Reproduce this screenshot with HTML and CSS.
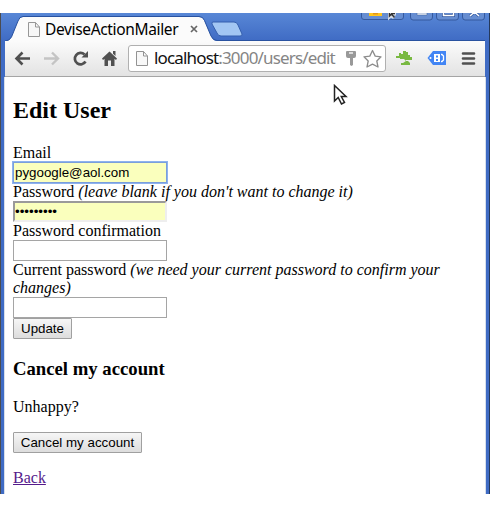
FILE: index.html
```
<!DOCTYPE html>
<html lang="en">
<head>
<meta charset="utf-8">
<title>DeviseActionMailer</title>
<link rel="stylesheet" href="styles.css">
</head>
<body>
<div class="window">
  <header class="chrome">
    <div class="tabstrip">
      <svg class="tab-shape" width="490" height="31" viewBox="0 13 490 31">
        <path d="M5 44V41Q9.500 41 11.500 37L18 21Q19.500 17 23 17H199Q203 17 204.500 21L211 36Q213 41 217 41H485V44Z" fill="#fbfbfb"/>
        <path d="M5 41Q9.500 41 11.500 37L18 21Q19.500 16.500 23 16.500H199Q203 16.500 204.500 20.500L211 36Q213 40.500 217 40.500H485" fill="none" stroke="#2952a0"/>
        <path d="M213 22H234Q237 22 238 25L242 34Q242.500 36 240 36H221Q218 36 217 33L212 24Q211.500 22 213 22Z" fill="#a2c6f3" stroke="#345fae"/>
        <g fill="#668dd1" stroke="#35599e"><path d="M361.500 12V17Q361.500 19.500 364 19.500H401Q403.500 19.500 403.500 17V12Z"/><path d="M410.500 12V17Q410.500 20 413 20H430Q432.500 20 432.500 17V12ZM436.500 12V17Q436.500 20 439 20H456Q458.500 20 458.500 17V12ZM462.500 12V17Q462.500 20 465 20H482Q484.500 20 484.500 17V12Z"/></g>
        <path d="M369 13H382V16H369Z" fill="#ffc51c"/><path d="M373 13H378V14.500H373Z" fill="#e29418"/>
        <path d="M389.500 12V17L391.500 15L394 18M391.500 14H396" fill="none" stroke="#d7dde8" stroke-width="3"/><path d="M389.500 12V16L391.500 14L394.500 17.500M391 13.500H395" fill="none" stroke="#333" stroke-width="1.500"/>
        <path d="M417 13H427V15H417Z" fill="#fff" stroke="#45649d" stroke-width=".6"/>
        <path d="M443.500 12V15.500H453.500V12M470 16L474.500 12L479 16" fill="none" stroke="#35599e" stroke-width="3"/><path d="M443.500 12V15.500H453.500V12M470 16L474.500 12L479 16" fill="none" stroke="#fff" stroke-width="1.500"/>
      </svg>
      <div class="tab">
        <svg width="12" height="15" viewBox="0 0 12 15"><path d="M.5.5H7.500L11.500 5V14.500H.5ZM7.500.5V5H11.500" fill="#f7f7f7" stroke="#979797"/></svg>
        <span class="tab-title">DeviseActionMailer</span>
        <svg class="tab-close" width="8" height="8" viewBox="0 0 8 8"><path d="M1 1L7 7M7 1L1 7" stroke="#666" stroke-width="1.700"/></svg>
      </div>
    </div>
    <div class="toolbar">
      <div class="nav">
        <svg width="110" height="26" viewBox="12 45 110 26">
          <path d="M30 58.500H17M22.500 52.500L16.500 58.500L22.500 64.500" fill="none" stroke="#505050" stroke-width="2.600"/>
          <path d="M44 58.500H57M52 52.500L58 58.500L52 64.500" fill="none" stroke="#c4c4c4" stroke-width="2.400"/>
          <path d="M84.500 54.500A5.700 5.700 0 1 0 85.500 61.500" fill="none" stroke="#505050" stroke-width="2.700"/><path d="M88 51V57.500H81.500Z" fill="#505050"/>
          <path d="M102 58.500L109.500 51.500L117 58.500L116 60L114.500 58.800V66H111V60.500H108V66H104.500V58.800L103 60ZM113 51H115.500V56L113 53.700Z" fill="#505050"/>
        </svg>
      </div>
      <div class="omnibox">
        <svg width="12" height="15" viewBox="0 0 12 15"><path d="M.5.5H7.500L11.500 5V14.500H.5ZM7.500.5V5H11.500" fill="#f8f8f8" stroke="#939393"/></svg>
        <span class="url"><b>localhost</b>:3000/users/edit</span>
        <svg class="box-icons" width="42" height="22" viewBox="344 47 42 22">
          <path d="M347 51H355Q356 51 356 52V56Q356 58 354 58H353V65L351.500 66L350 65V58H348Q346 58 346 56V52Q346 51 347 51Z" fill="#999"/><path d="M349 53H353" stroke="#fff" stroke-width="1.300"/>
          <path d="M372.500 50.500L375.200 56.100L381 56.800L376.800 61L378 67L372.500 64.200L367 67L368.200 61L364 56.800L369.800 56.100Z" fill="#fff" stroke="#8c8c8c" stroke-width="1.300" stroke-linejoin="round"/>
        </svg>
      </div>
      <svg class="extensions" width="84" height="26" viewBox="394 45 84 26">
        <path d="M396 56H399V53H401V54H403V51H406V52H408V55H410V57H412V60H406V61H408L410 63V65H401V63H403L406 61L404 59H400V58H396Z" fill="#79b942"/>
        <path d="M427.500 58L433 51H446V65H433Z" fill="#4285f4"/><path d="M434 54H440V62H434Z" fill="#fff"/><path d="M436 55.500H438V57.500H436ZM436 59H438V61H436Z" fill="#4285f4"/><path d="M440.500 53.500V62.500" stroke="#4285f4"/><path d="M441 54.500H442L443.500 56V60L442 61.500H441" fill="none" stroke="#fff" stroke-width="1.300"/><circle cx="430.500" cy="58" r="1" fill="#fff"/>
        <path d="M463 53.500H474M463 58.500H474M463 63.500H474" stroke="#505050" stroke-width="2.600" stroke-linecap="round"/>
      </svg>
    </div>
  </header>
  <main class="page">
    <h2>Edit User</h2>
    <form>
      <div class="field"><label for="email">Email</label><input class="filled focused" id="email" type="text" value="pygoogle@aol.com"></div>
      <div class="field"><label for="password">Password <i>(leave blank if you don't want to change it)</i></label><input class="filled inset" id="password" type="password" value="123456789"></div>
      <div class="field"><label for="confirmation">Password confirmation</label><input id="confirmation" type="password"></div>
      <div class="field"><label for="current">Current password <i>(we need your current password to confirm your changes)</i></label><input id="current" type="password"></div>
      <button class="update" type="button">Update</button>
    </form>
    <h3>Cancel my account</h3>
    <p>Unhappy?</p>
    <button class="cancel" type="button">Cancel my account</button>
    <a href="#">Back</a>
  </main>
  <svg class="pointer" width="16" height="22" viewBox="0 0 16 22"><path d="M1.500 1.500V17L5.200 13.500L8.500 20L11.500 18.500L8.300 12.500H13Z" fill="#fff" stroke="#222" stroke-width="1.500"/></svg>
</div>
</body>
</html>
```
FILE: styles.css
```
* { box-sizing: border-box; }
body { margin: 0; padding-top: 13px; background: #fff; overflow: hidden; }
svg { display: block; flex: none; }
.window {
  position: relative;
  width: 490px;
  height: 481px;
  border-left: 1px solid #4b4c50;
  border-right: 1px solid #25395c;
  background: #3f6bc4;
  padding: 0 3px;
}
.chrome { height: 64px; margin: 0 -3px; background: linear-gradient(#5887d6, #3f6bc4 28px); }
.tabstrip { position: relative; height: 28px; }
.tab-shape { position: absolute; left: -1px; top: 0; }
.tab { position: relative; display: flex; align-items: center; height: 32px; padding-left: 27px; }
.tab-title { width: 134px; margin-left: 5px; font: 15.500px/20px "Noto Sans", sans-serif; letter-spacing: -.35px; white-space: nowrap; }
.tab-close { margin-left: 11px; }
.toolbar {
  position: relative;
  display: flex;
  align-items: center;
  height: 36px;
  margin: 0 4px;
  padding: 0 0 1px 7px;
  border-bottom: 1px solid #a5a5a5;
  background: linear-gradient(#fbfbfb, #e3e3e3);
}
.omnibox {
  display: flex;
  align-items: center;
  flex: none;
  width: 258px;
  height: 27px;
  margin-left: 6px;
  padding-left: 7px;
  border: 1px solid #b0b0b0;
  border-radius: 3px;
  background: #fff;
}
.url { flex: none; width: 184px; margin-left: 6px; color: #858585; font: 17px/22px "Noto Sans", sans-serif; letter-spacing: -.84px; white-space: nowrap; }
.url b { color: #111; font-weight: 400; }
.box-icons { margin-left: 6px; }
.extensions { margin-left: 8px; }
.page {
  height: 417px;
  padding: 20px 8px 0;
  border-left: 1px solid #d7dfea;
  border-right: 1px solid #d7dfea;
  background: #fff;
  color: #000;
  font: 16px/18px "Liberation Serif", serif;
}
h2 { margin: 0 0 20px; font-size: 24px; line-height: 27px; }
h3 { margin: 19px 0; font-size: 18.720px; line-height: 21px; }
p { margin: 0 0 16px; }
.field label, .field input { display: block; }
input {
  width: 154px;
  height: 21px;
  padding: 1px;
  border: 1px solid #a5a5a5;
  background: #fff;
  color: #000;
  font: 13.333px "Liberation Sans", sans-serif;
  outline: 0;
}
.filled { border: 2px solid; background: #faffbd; padding: 0; }
.inset { border-color: #9a9a9a #eee #eee #9a9a9a; }
.focused { border: 1px solid #7a9edb; padding: 1px; box-shadow: 0 0 0 1px #8eb3ee; }
button {
  display: block;
  height: 21px;
  padding: 0;
  border: 1px solid #a0a0a0;
  border-radius: 1px;
  background: linear-gradient(#f6f6f6, #ddd);
  color: #000;
  font: 13.333px "Liberation Sans", sans-serif;
}
.update { width: 59px; }
.cancel { width: 129px; margin-bottom: 16px; }
a { color: #551a8b; }
.pointer { position: absolute; left: 332px; top: 71px; }
```
